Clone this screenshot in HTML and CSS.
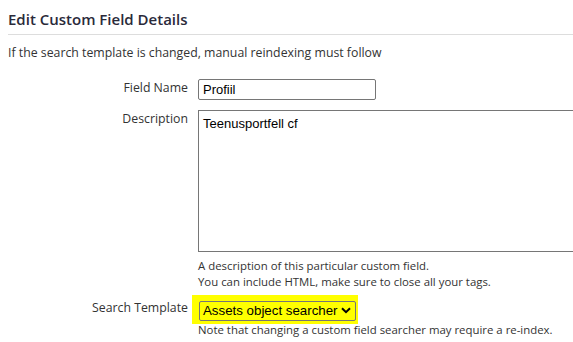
FILE: index.html
```
<!DOCTYPE html>
<html>
<head>
<meta charset="utf-8">
<link rel="stylesheet" href="styles.css">
</head>
<body>
<div class="page">
  <h2 class="title">Edit Custom Field Details</h2>
  <p class="intro">If the search template is changed, manual reindexing must follow</p>
  <div class="row">
    <label class="label">Field Name</label>
    <div class="field"><input class="text" type="text" value="Profiil"></div>
  </div>
  <div class="row">
    <label class="label">Description</label>
    <div class="field">
      <textarea class="area">Teenusportfell cf</textarea>
      <div class="help">A description of this particular custom field.<br>You can include HTML, make sure to close all your tags.</div>
    </div>
  </div>
  <div class="row row-search">
    <label class="label">Search Template</label>
    <div class="field">
      <span class="hl"><span class="select">Assets object searcher <svg class="chev" width="10" height="7" viewBox="0 0 10 7"><path d="M1 1.2 L5 5.2 L9 1.2" fill="none" stroke="#000" stroke-width="2"/></svg></span></span>
      <div class="help">Note that changing a custom field searcher may require a re-index.</div>
    </div>
  </div>
</div>
</body>
</html>
```
FILE: styles.css
```
html, body { margin: 0; padding: 0; background: #fff; }
body { font-family: "Open Sans", "Noto Sans", sans-serif; color: #333; overflow: hidden; }
.page { padding: 8px 0 0 8px; }
.title { margin: 0; font-size: 15px; font-weight: 600; line-height: 22px; padding-bottom: 4px; border-bottom: 1px solid #ddd; color: #2a2a3a; }
.intro { margin: 9px 0 0 0; font-size: 12.3px; line-height: 18px; }
.row { display: flex; margin-top: 17px; }
.row + .row { margin-top: 10px; }
.label { width: 180px; text-align: right; font-size: 12.3px; line-height: 18px; padding-top: 0; }
.field { margin-left: 10px; flex: 1; min-width: 0; }
.text { display: block; box-sizing: border-box; width: 178px; height: 21px; margin: 0; padding: 1px 4px; border: 1px solid #767676; border-radius: 2px; font-family: "Liberation Sans", Arial, sans-serif; font-size: 13px; color: #000; }
.area { display: block; box-sizing: border-box; width: 400px; height: 142px; margin: 0; padding: 5px 4px; border: 1px solid #767676; font-family: "Liberation Sans", Arial, sans-serif; font-size: 13px; color: #000; resize: none; }
.help { font-size: 11.4px; line-height: 16px; margin-top: 6px; }
.row-search { margin-top: 5px !important; }
.row-search .label { padding-top: 4px; }
.hl { display: inline-block; background: #ffff00; padding: 3px 2px 3px 7px; margin-left: -6px; }
.select { display: inline-flex; align-items: center; gap: 3px; box-sizing: border-box; height: 20px; padding: 0 4px 0 3px; border: 1px solid #767676; border-radius: 2px; font-family: "Liberation Sans", Arial, sans-serif; font-size: 13.3px; color: #000; }
.row-search .help { margin-top: -2px; }
```
